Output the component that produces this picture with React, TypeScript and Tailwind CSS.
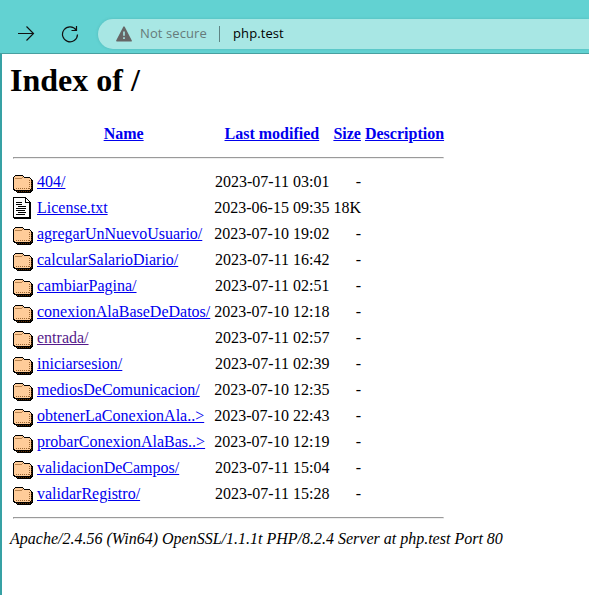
import React from "react";

type Entry = { name: string; date: string; size: string; file?: boolean; visited?: boolean };

const entries: Entry[] = [
  { name: "404/", date: "2023-07-11 03:01", size: "-" },
  { name: "License.txt", date: "2023-06-15 09:35", size: "18K", file: true },
  { name: "agregarUnNuevoUsuario/", date: "2023-07-10 19:02", size: "-" },
  { name: "calcularSalarioDiario/", date: "2023-07-11 16:42", size: "-" },
  { name: "cambiarPagina/", date: "2023-07-11 02:51", size: "-" },
  { name: "conexionAlaBaseDeDatos/", date: "2023-07-10 12:18", size: "-" },
  { name: "entrada/", date: "2023-07-11 02:57", size: "-", visited: true },
  { name: "iniciarsesion/", date: "2023-07-11 02:39", size: "-" },
  { name: "mediosDeComunicacion/", date: "2023-07-10 12:35", size: "-" },
  { name: "obtenerLaConexionAla..>", date: "2023-07-10 22:43", size: "-" },
  { name: "probarConexionAlaBas..>", date: "2023-07-10 12:19", size: "-" },
  { name: "validacionDeCampos/", date: "2023-07-11 15:04", size: "-" },
  { name: "validarRegistro/", date: "2023-07-11 15:28", size: "-" },
];

function FolderIcon() {
  return (
    <svg width="20" height="22" viewBox="0 0 20 22" shapeRendering="crispEdges" className="block">
      <path d="M2 4h8v1h1v1h6v1h1v1h1v1h1v11h-1v1h-1v1H4v-1H3v-1H1v-1H0V6h1V5h1z" fill="#000" />
      <path d="M2 5h8v1h1v1h6v1h1v10h-1v1H2v-1H1V6h1z" fill="#ffcc99" />
      <path d="M2 7.5h7M9 6.5h1" stroke="#b98450" />
      <path d="M3 17.5h14" stroke="#996633" strokeDasharray="1 1" />
      <path d="M16.5 9v9" stroke="#996633" strokeDasharray="1 1" />
      <path d="M18.5 10v9M4 20.5h14" stroke="#663300" strokeDasharray="1 1" />
    </svg>
  );
}

function TextIcon() {
  return (
    <svg width="20" height="22" viewBox="0 0 20 22" shapeRendering="crispEdges" className="block">
      <path d="M0 0h13v1h1v1h1v1h1v1h1v1h1v17H1v-1H0z" fill="#000" />
      <path d="M1 1h11v5h4v14H1z" fill="#fff" />
      <path d="M13 2h1v1h1v1h1v1h-3z" fill="#fff" />
      <path d="M3 5.5h6M3 7.5h6M5 9.5h8M3 11.5h10M3 13.5h9M5 15.5h8M3 17.5h9" stroke="#000" />
    </svg>
  );
}

function HeadLink({ children }: { children: React.ReactNode }) {
  return <a href="#" className="text-[#0000ee] underline">{children}</a>;
}

function Rule() {
  return (
    <tr>
      <td colSpan={5} className="p-px">
        <hr className="my-2 h-0.5 border border-[#9a9a9a] border-r-[#eee] border-b-[#eee]" />
      </td>
    </tr>
  );
}

function Toolbar() {
  return (
    <header className="flex h-[54px] items-end border-b border-[#48a0a0] bg-[#62d2d2] pb-1 pl-[18px] font-['Open_Sans',sans-serif]">
      <svg width="17" height="16" viewBox="0 0 17 16" className="mb-[8px]" fill="none" stroke="#111" strokeWidth="1.15">
        <path d="M0 8.5h15.5M8.5 1.5l7 7-7 7" />
      </svg>
      <svg width="18" height="18" viewBox="0 0 18 18" className="mb-[6px] ml-[26px]" fill="none" stroke="#111" strokeWidth="1.2">
        <path d="M15.2 5.1A7.5 7.5 0 1 0 16.5 9.5M15.5 1v4.5h-5" />
      </svg>
      <div className="ml-[19px] flex h-[30px] flex-1 items-center rounded-l-full bg-[#a8e7e4] pl-[18px] text-[13px] shadow-[0_0_3px_rgba(40,120,120,0.25)]">
        <svg width="16" height="16" viewBox="0 0 16 16" className="shrink-0">
          <path d="M8 1.2 15.1 14.8H.9z" fill="#666" stroke="#666" strokeWidth="1.6" strokeLinejoin="round" />
          <path d="M8 5.5v4.3M8 11.3V13" stroke="#a8e7e4" strokeWidth="1.6" />
        </svg>
        <span className="ml-2 w-[67px] whitespace-nowrap tracking-[0.1px] text-[#667b7a]">Not secure</span>
        <span className="ml-3 h-4 w-px bg-[#5e8584]" />
        <span className="ml-[13px] tracking-[0.1px] text-black">php.test</span>
      </div>
    </header>
  );
}

export default function App() {
  return (
    <div className="h-[595px] w-[589px] overflow-hidden bg-white">
      <Toolbar />
      <main className="h-[541px] border-l-2 border-[#36a1a4] px-2 pt-2 font-['Liberation_Serif','Times_New_Roman',serif] text-base leading-[18px] text-black">
        <h1 className="text-[32px] leading-9 font-bold">Index of /</h1>
        <table className="mt-[22px] border-separate border-spacing-[2px]">
          <thead>
            <tr>
              <th className="p-px"><div className="h-[22px] w-5" /></th>
              <th className="p-px"><HeadLink>Name</HeadLink></th>
              <th className="p-px"><HeadLink>Last modified</HeadLink></th>
              <th className="p-px"><HeadLink>Size</HeadLink></th>
              <th className="p-px"><HeadLink>Description</HeadLink></th>
            </tr>
          </thead>
          <tbody>
            <Rule />
            {entries.map((entry) => (
              <tr key={entry.name}>
                <td className="p-px align-top">{entry.file ? <TextIcon /> : <FolderIcon />}</td>
                <td className="p-px">
                  <a href="#" className={entry.visited ? "text-[#551a8b] underline" : "text-[#0000ee] underline"}>{entry.name}</a>
                </td>
                <td className="p-px text-right">{entry.date}</td>
                <td className="p-px text-right">{entry.size}</td>
                <td className="p-px" />
              </tr>
            ))}
            <Rule />
          </tbody>
        </table>
        <address className="italic">Apache/2.4.56 (Win64) OpenSSL/1.1.1t PHP/8.2.4 Server at php.test Port 80</address>
      </main>
    </div>
  );
}
